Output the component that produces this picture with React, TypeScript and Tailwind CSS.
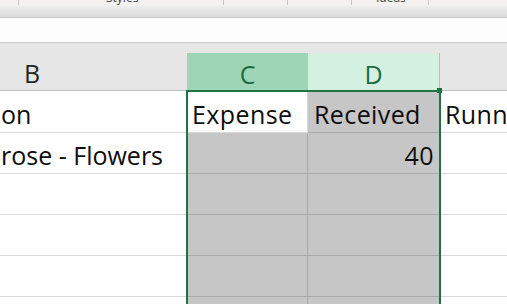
const rows = [
  { b: "on", c: "Expense", d: "Received", e: "Running Balance", first: true },
  { b: "rose - Flowers", c: "", d: "40", e: "" },
  { b: "", c: "", d: "", e: "" },
  { b: "", c: "", d: "", e: "" },
  { b: "", c: "", d: "", e: "" },
  { b: "", c: "", d: "", e: "" },
];

function Tick({ left }: { left: string }) {
  return <div className={`${left} h-[5px] w-px shrink-0 bg-[#c8c6c4]`} />;
}

export default function App() {
  return (
    <div
      className="relative h-[304px] w-[507px] overflow-hidden bg-white text-[#0d0d0d]"
      style={{ fontFamily: "'Open Sans', Lato, sans-serif" }}
    >
      {/* ribbon group labels, mostly scrolled off the top */}
      <div className="flex h-[6px] items-start overflow-hidden bg-[#f3f2f1] text-[12px] leading-none text-[#444]">
        <Tick left="ml-[18px]" />
        <span className="-mt-[8px] ml-[87px] w-[30px] shrink-0">Styles</span>
        <Tick left="ml-[87px]" />
        <Tick left="ml-[63px]" />
        <Tick left="ml-[63px]" />
        <span className="-mt-[8px] ml-[24px] w-[30px] shrink-0">Ideas</span>
        <Tick left="ml-[22px]" />
      </div>
      <div className="h-[12px] border-b border-[#c8c8c8] bg-gradient-to-b from-[#ededed] to-[#dcdcdc]" />
      <div className="h-[25px] border-b border-[#c6c6c6] bg-[#fdfdfd]" />
      <div className="h-[10px] bg-[#e6e6e6]" />

      {/* column headers */}
      <div className="flex h-[38px] text-[25px] leading-none">
        <div className="flex w-[187px] shrink-0 items-end border-b border-[#bdbdbd] bg-[#e6e6e6] pb-[4px] pl-[24px] text-[#262626]">
          B
        </div>
        <div className="flex w-[121px] shrink-0 items-end justify-center bg-[#9fd5b7] pb-[4px] text-[#1c6b3f]">
          C
        </div>
        <div className="flex w-[132px] shrink-0 items-end justify-center border-r border-[#bdbdbd] bg-[#d3f0e0] pb-[4px] text-[#1c6b3f]">
          D
        </div>
        <div className="flex-1 border-b border-[#bdbdbd] bg-[#e6e6e6]" />
      </div>

      {/* cells */}
      {rows.map((r, i) => (
        <div
          key={i}
          className={`flex ${r.first ? "h-[42px]" : "h-[41px]"} text-[25px] leading-none tracking-[0.4px]`}
        >
          <div className="flex w-[187px] shrink-0 items-end overflow-hidden whitespace-nowrap border-b border-[#d9d9d9] pb-[5px] pl-[1px] tracking-normal">
            {r.b}
          </div>
          <div
            className={`flex w-[121px] shrink-0 items-end border-b border-r pb-[5px] pl-[5px] ${
              r.first ? "border-[#d9d9d9] bg-white" : "border-[#a9a9a9] bg-[#c6c6c6]"
            }`}
          >
            {r.c}
          </div>
          <div className="flex w-[132px] shrink-0 items-end border-b border-[#a9a9a9] bg-[#c6c6c6] pb-[5px] pl-[6px] pr-[6px]">
            {r.d === "40" ? <span className="ml-auto">40</span> : r.d}
          </div>
          <div className="flex flex-1 items-end overflow-hidden whitespace-nowrap border-b border-[#d9d9d9] pb-[5px] pl-[5px]">
            {r.e}
          </div>
        </div>
      ))}

      {/* selection outline */}
      <div className="absolute left-[186px] top-[90px] h-[230px] w-[255px] border-2 border-[#217346]" />
      <div className="absolute left-[437px] top-[88px] h-[5px] w-[5px] bg-[#217346]" />
    </div>
  );
}
